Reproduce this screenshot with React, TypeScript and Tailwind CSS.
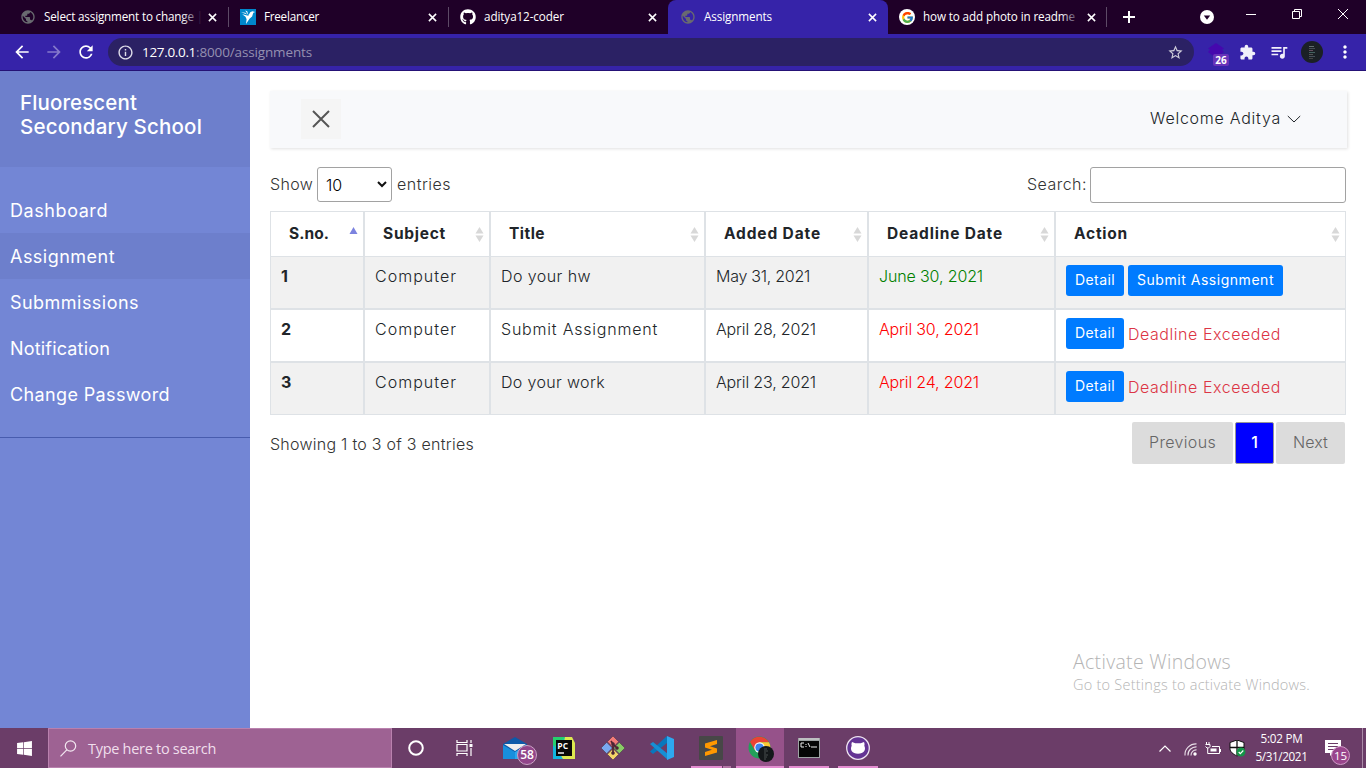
import React, { useLayoutEffect, useRef, useState } from "react";
import {
  MdArrowBack,
  MdArrowForward,
  MdRefresh,
  MdInfoOutline,
  MdStarBorder,
  MdExtension,
  MdQueueMusic,
  MdMoreVert,
  MdPublic,
} from "react-icons/md";
import { FaGithub, FaWindows } from "react-icons/fa";
import { FcGoogle } from "react-icons/fc";

/** A single line of text whose letter spacing is adjusted to fill a given width. */
function Fit({ w, children, className = "" }: { w: number; children: string; className?: string }) {
  const ref = useRef<HTMLSpanElement>(null);
  const [spacing, setSpacing] = useState(0);
  useLayoutEffect(() => {
    if (ref.current) {
      const natural = ref.current.getBoundingClientRect().width;
      setSpacing((w - natural) / Math.max(1, children.length));
    }
  }, [w, children]);
  return (
    <span className={`inline-block whitespace-nowrap ${className}`} style={{ width: w }}>
      <span ref={ref} style={{ letterSpacing: spacing }}>
        {children}
      </span>
    </span>
  );
}

function Close() {
  return (
    <svg viewBox="0 0 10 10" className="size-[9px] shrink-0" stroke="#fff" strokeWidth="1.7">
      <path d="M1 1l8 8M9 1L1 9" />
    </svg>
  );
}

function Bird() {
  return (
    <svg viewBox="0 0 16 16" className="size-4 shrink-0">
      <rect width="16" height="16" fill="#0087cc" />
      <path d="M1 3.300l4.300.5 2 1.700zM5.200 1.500l2 .8 1.300 4zM8.300 6.800l1.900-3.500 2.200-1 2.800.6-1.900.9-1.200 3.700-2.600 2.300L6 15l.6-4.800-1.100-2.400-3.300-2.600 5 1.400z" fill="#fff" />
    </svg>
  );
}

function Tab({ icon, title, w, fade = false, active = false, width, line = false }: {
  icon: React.ReactNode; title: string; w: number; fade?: boolean; active?: boolean; width: string; line?: boolean;
}) {
  return (
    <div className={`relative flex h-[34px] shrink-0 items-center ${width} ${active ? "rounded-t-lg bg-[#3623a9] pl-[12px]" : "pl-5"}`}>
      <span className="flex w-6 shrink-0 items-center">{icon}</span>
      <span className="relative mb-[2px] w-[158px] shrink-0 text-[11.7px] leading-5 text-white">
        <Fit w={w}>{title}</Fit>
        {fade && <span className="absolute inset-y-0 right-0 w-5 bg-linear-to-r from-transparent to-[#1f0028]" />}
      </span>
      <span className="ml-[6px] flex"><Close /></span>
      {line && <span className="absolute right-0 top-[7px] h-5 w-px bg-[#5d4a66]" />}
    </div>
  );
}

function TabStrip() {
  return (
    <div className="flex h-[34px] bg-[#1f0028]">
      <Tab icon={<MdPublic className="size-4 text-[#696a70]" />} title="Select assignment to change |" w={159} fade width="w-[229px]" line />
      <div className="-ml-[9px] flex">
        <Tab icon={<Bird />} title="Freelancer" w={55} width="w-[229px]" line />
      </div>
      <div className="-ml-[9px] flex">
        <Tab icon={<FaGithub className="size-4 text-white" />} title="aditya12-coder" w={80} width="w-[228px]" />
      </div>
      <Tab icon={<MdPublic className="size-4 text-[#696a70]" />} title="Assignments" w={68} active width="w-[220px]" />
      <div className="-ml-[9px] flex">
        <Tab
          icon={<span className="flex size-4 items-center justify-center rounded-full bg-white"><FcGoogle className="size-[13px]" /></span>}
          title="how to add photo in readme" w={152} fade width="w-[228px]" line
        />
      </div>
      <svg viewBox="0 0 12 12" className="ml-4 mt-[11px] size-3" stroke="#fff" strokeWidth="2"><path d="M6 0v12M0 6h12" /></svg>
      <div className="ml-auto flex items-start">
        <svg viewBox="0 0 14 14" className="mt-[10px] size-[14px]"><circle cx="7" cy="7" r="7" fill="#fff" /><path d="M3.800 5.500h6.400L7 9.700z" fill="#1f0028" /></svg>
        <svg viewBox="0 0 10 10" className="ml-8 mt-[10px] size-[10px]" stroke="#fff"><path d="M0 4.500h10" /></svg>
        <svg viewBox="0 0 10 10" className="ml-9 mt-[9px] size-[10px]" stroke="#fff" fill="none"><path d="M.5 2.500h7v7h-7zM2.500 2.500v-2h7v7h-2" /></svg>
        <svg viewBox="0 0 10 10" className="ml-9 mr-[18px] mt-[9px] size-[10px]" stroke="#fff"><path d="M0 0l10 10M10 0L0 10" /></svg>
      </div>
    </div>
  );
}

function Toolbar() {
  return (
    <div className="flex h-[37px] items-center border-b border-[#251276] bg-[#3623a9] text-white">
      <MdArrowBack className="ml-[12px] size-5" />
      <MdArrowForward className="ml-3 size-5 text-[#8579cb]" />
      <MdRefresh className="ml-[12px] size-5" />
      <div className="ml-[12px] flex h-7 w-[1086px] items-center rounded-full bg-[#2b2164] pl-[9px] pr-[10px] text-[13.5px]">
        <MdInfoOutline className="size-[17px] text-[#dedce9]" />
        <span className="ml-[8px] flex leading-5">
          <Fit w={54}>127.0.0.1</Fit>
          <Fit w={116} className="text-[#9590b1]">:8000/assignments</Fit>
        </span>
        <MdStarBorder className="ml-auto size-[17px] text-[#cfcdda]" />
      </div>
      <div className="relative ml-[13px] size-5">
        <svg viewBox="0 0 18 18" className="size-[18px]"><path d="M9 1l8 5.500-2 1.200 2 2.300-8 6-8-6 2-2.300-2-1.200z" fill="#4508ae" /></svg>
        <span className="absolute left-[6px] top-[12px] flex h-[12px] w-4 items-center justify-center rounded-[2px] bg-[#6833b9] text-[10px] font-bold">26</span>
      </div>
      <MdExtension className="ml-[12px] size-[17px] text-[#f1f0fa]" />
      <MdQueueMusic className="ml-[13px] size-5 text-[#f1f0fa]" />
      <div className="ml-[12px] flex size-[22px] items-center justify-center rounded-full bg-[#1b2025]">
        <div className="flex w-[6px] flex-col gap-px">
          <i className="h-px w-[5px] bg-[#626e6e]" /><i className="h-px bg-[#454c54]" /><i className="h-px w-1 bg-[#655060]" /><i className="h-px bg-[#446260]" /><i className="h-px w-1 bg-[#555]" /><i className="h-px bg-[#48505a]" /><i className="h-px w-1 bg-[#444]" />
        </div>
      </div>
      <MdMoreVert className="ml-[12px] size-5" />
    </div>
  );
}

const links: [string, number][] = [
  ["Dashboard", 98],
  ["Assignment", 105],
  ["Submmissions", 129],
  ["Notification", 100],
  ["Change Password", 160],
];

function Sidebar() {
  return (
    <aside className="w-[250px] shrink-0 bg-[#7386d5] text-white">
      <h3 className="h-24 bg-[#6d7fcc] pl-5 pt-5 text-[20.5px] font-medium leading-6">
        <Fit w={117} className="block">Fluorescent</Fit>
        <Fit w={182} className="block">Secondary School</Fit>
      </h3>
      <ul className="h-[271px] border-b border-[#485cae] pt-5 text-[18px] leading-[26px]">
        {links.map(([name, w], i) => (
          <li key={name} className={`h-[46px] px-[10px] pt-[11px] ${i === 1 ? "bg-[#6d7fcc]" : ""}`}>
            <Fit w={w}>{name}</Fit>
          </li>
        ))}
      </ul>
    </aside>
  );
}

const columns: [string, number, string][] = [
  ["S.no.", 40, "w-[94px]"],
  ["Subject", 63, "w-[126px]"],
  ["Title", 36, "w-[215px]"],
  ["Added Date", 97, "w-[163px]"],
  ["Deadline Date", 116, "w-[187px]"],
  ["Action", 54, "w-[291px]"],
];

const rows = [
  { id: "1", title: "Do your hw", tw: 90, added: "May 31, 2021", aw: 94, due: "June 30, 2021", dw: 104, open: true },
  { id: "2", title: "Submit Assignment", tw: 157, added: "April 28, 2021", aw: 100, due: "April 30, 2021", dw: 100, open: false },
  { id: "3", title: "Do your work", tw: 104, added: "April 23, 2021", aw: 100, due: "April 24, 2021", dw: 100, open: false },
];

function SortMark({ active }: { active: boolean }) {
  return (
    <svg viewBox="0 0 9 15" className="h-[15px] w-[9px]">
      {active ? <path d="M0.500 7L4.500 0l4 7z" fill="#7c83df" /> : <path d="M0.500 6.500L4.500 0l4 6.500zM0.500 8.500L4.500 15l4-6.500z" fill="#d8d8d8" />}
    </svg>
  );
}

function DataTable() {
  const cell = "border border-[#dee2e6] px-[10px] pt-2 align-top";
  return (
    <table className="mt-[8px] w-[1076px] table-fixed border-separate border-spacing-0 text-left text-[#212529]">
      <thead>
        <tr className="h-[45px]">
          {columns.map(([name, w, width], i) => (
            <th key={name} className={`border border-b-0 border-[#dee2e6] p-0 pl-[18px] pr-[5px] text-[15.5px] font-bold leading-6 ${width}`}>
              <div className="flex items-center justify-between">
                <Fit w={w}>{name}</Fit>
                <SortMark active={i === 0} />
              </div>
            </th>
          ))}
        </tr>
      </thead>
      <tbody>
        {rows.map((r, i) => (
          <tr key={r.id} className={`h-[53px] ${i % 2 === 0 ? "bg-[#f1f1f1]" : "bg-white"}`}>
            <td className={`${cell} font-bold`}>{r.id}</td>
            <td className={cell}><Fit w={82}>Computer</Fit></td>
            <td className={cell}><Fit w={r.tw}>{r.title}</Fit></td>
            <td className={cell}><Fit w={r.aw}>{r.added}</Fit></td>
            <td className={`${cell} ${r.open ? "text-[#008000]" : "text-[#ff0000]"}`}><Fit w={r.dw}>{r.due}</Fit></td>
            <td className={cell}>
              <div className="flex items-start gap-1">
                <button className="flex h-[31px] w-[58px] items-center justify-center rounded-[3px] bg-[#007bff] pb-px text-[14px] font-normal text-white"><Fit w={40}>Detail</Fit></button>
                {r.open ? (
                  <button className="flex h-[31px] w-[155px] items-center justify-center rounded-[3px] bg-[#007bff] pb-px text-[14px] font-normal text-white"><Fit w={137}>Submit Assignment</Fit></button>
                ) : (
                  <span className="pt-[5px] text-[#dc3545]"><Fit w={153}>Deadline Exceeded</Fit></span>
                )}
              </div>
            </td>
          </tr>
        ))}
      </tbody>
    </table>
  );
}

function Content() {
  return (
    <main className="flex-1 bg-white pl-5 pt-5 text-[16px] font-light leading-[22px] text-[#333]">
      <div className="flex h-[57px] w-[1077px] items-center bg-[#f8f9fb] pb-[2px] pl-[31px] pr-[46px] text-[#212529] shadow-[1px_1px_3px_rgba(0,0,0,0.12)]">
        <button className="flex size-10 items-center justify-center bg-[#f5f5f5]">
          <svg viewBox="0 0 18 18" className="size-[18px]" stroke="#555" strokeWidth="2"><path d="M1 1l16 16M17 1L1 17" /></svg>
        </button>
        <Fit w={131} className="mb-[2px] ml-auto">Welcome Aditya</Fit>
        <svg viewBox="0 0 14 8" className="ml-[6px] h-2 w-[14px]" fill="none" stroke="#212529"><path d="M.8 1L7 7l6.200-6" /></svg>
      </div>
      <div className="mt-[19px] flex h-9 w-[1076px] items-start">
        <Fit w={43} className="mt-[6px]">Show</Fit>
        <div className="ml-1 flex h-[35px] w-[75px] items-center justify-between rounded-[3px] border border-[#a2a2a2] pl-[8px] pr-1 text-black">
          <Fit w={16}>10</Fit>
          <svg viewBox="0 0 10 7" className="h-[7px] w-[10px]" fill="none" stroke="#111" strokeWidth="2"><path d="M1 1l4 4 4-4" /></svg>
        </div>
        <Fit w={54} className="ml-[5px] mt-[6px]">entries</Fit>
        <Fit w={60} className="ml-auto mt-[6px]">Search:</Fit>
        <input aria-label="Search" className="ml-[3px] h-9 w-64 rounded-[3px] border border-[#a2a2a2] bg-white" />
      </div>
      <DataTable />
      <div className="flex w-[1075px] items-start pt-[7px]">
        <Fit w={204} className="mt-[11px]">Showing 1 to 3 of 3 entries</Fit>
        <div className="ml-auto flex h-[42px] gap-[2px] text-[#666]">
          <button className="flex w-[101px] items-center justify-center rounded-[2px] bg-[#dcdcdc] pb-[2px]"><Fit w={67}>Previous</Fit></button>
          <button className="w-[39px] rounded-[2px] border border-[#979797] bg-[#0000ff] pb-[2px] font-medium text-white">1</button>
          <button className="flex w-[69px] items-center justify-center rounded-[2px] bg-[#dcdcdc] pb-[2px]"><Fit w={35}>Next</Fit></button>
        </div>
      </div>
    </main>
  );
}

function AppCell({ children, bar = "", active = false }: { children: React.ReactNode; bar?: string; active?: boolean }) {
  return (
    <div className={`relative flex h-10 w-12 items-center justify-center ${active ? "bg-[#96528a]" : ""}`}>
      {children}
      {bar && <span className={`absolute bottom-0 h-[2px] bg-[#e38cd0] ${bar}`} />}
    </div>
  );
}

function Taskbar() {
  return (
    <footer className="flex h-10 bg-[#6b3d68] text-white">
      <div className="flex w-12 items-center justify-center">
        <FaWindows className="size-[17px]" />
      </div>
      <div className="flex w-[344px] items-center border border-[#b981ae] bg-[#9e6293] pl-[11px] text-[14.5px] text-[#f0dfec]">
        <svg viewBox="0 0 17 17" className="size-[17px]" fill="none" stroke="#f3e8f1" strokeWidth="1.200"><circle cx="10.500" cy="6" r="5.200" /><path d="M6.800 9.800L.5 16.300" /></svg>
        <Fit w={128} className="ml-[11px] mt-px">Type here to search</Fit>
      </div>
      <div className="flex w-12 items-center justify-center">
        <svg viewBox="0 0 18 18" className="size-[18px]" fill="none" stroke="#fff" strokeWidth="2"><circle cx="9" cy="9" r="6.800" /></svg>
      </div>
      <div className="flex w-12 items-center justify-center">
        <svg viewBox="0 0 17 16" className="h-4 w-[17px]" fill="none" stroke="#fff" strokeWidth="1.200"><path d="M1 0v2.500h10V0M1 4.500h10v6.500H1zM1 16v-2.500h10V16M15 0v3M15 8v8" /><path d="M13.500 4h3v3h-3z" fill="#fff" stroke="none" /></svg>
      </div>
      <div className="ml-[3px] flex gap-px">
        <AppCell>
          <svg viewBox="0 0 24 22" className="h-[22px] w-6"><path d="M0 7L12 0l12 7v15H0z" fill="#0d5aa9" /><path d="M0 8l12 7L24 8v14H0z" fill="#188fdd" /><path d="M24 8v14H12V15z" fill="#2aa7ed" /><path d="M1 7h22l-11 7z" fill="#eee" /></svg>
          <span className="absolute left-[26px] top-[17px] flex size-[20px] items-center justify-center rounded-full border border-[#cba3c5] bg-[#91458a] text-[12px] font-semibold">58</span>
        </AppCell>
        <AppCell>
          <svg viewBox="0 0 22 22" className="size-[22px]"><path d="M0 0h14L9 22H0z" fill="#20c997" /><path d="M12 0h7l3 6v16H8z" fill="#dce84f" /><path d="M0 0h12L0 10z" fill="#25d06e" /><path d="M0 8v14h10z" fill="#12b5dd" /><rect x="3" y="3" width="16" height="16" fill="#080808" /><path d="M5 16h6" stroke="#fff" strokeWidth="1.400" /><text x="4.300" y="11.500" fill="#fff" fontSize="8.500" fontWeight="700">PC</text></svg>
        </AppCell>
        <AppCell>
          <svg viewBox="0 0 24 24" className="size-6" stroke="#4d3448" strokeWidth=".6"><path d="M12 0l5.700 5.700-5.700 5.700-5.700-5.700z" fill="#f47b78" /><path d="M5.700 6.300l5.700 5.700-5.700 5.700L0 12z" fill="#79a9ef" /><path d="M18.300 6.300L24 12l-5.700 5.700-5.700-5.700z" fill="#89cc66" /><path d="M12 12.600l5.700 5.700L12 24l-5.700-5.700z" fill="#f5d568" /><path d="M10 5l2 3v9M12 8l4 4" stroke="#51202e" strokeWidth="1.700" fill="none" /><g fill="#51202e"><circle cx="12" cy="8" r="1.500" /><circle cx="12" cy="17" r="1.500" /><circle cx="16" cy="12" r="1.500" /></g></svg>
        </AppCell>
        <AppCell>
          <svg viewBox="0 0 24 24" className="size-6"><path d="M17 0v7L3 18l-3-2.500z" fill="#0877bd" /><path d="M0 8l3-2 15 12v6z" fill="#168fd4" /><path d="M17 0l7 3v18l-7 3z" fill="#2da8ef" /></svg>
        </AppCell>
        <AppCell bar="left-1 w-[31px]">
          <svg viewBox="0 0 24 24" className="size-6"><rect width="24" height="24" rx="1" fill="#474747" /><path d="M6 7.500L18 4v4l-7 2.200 7 2.200v4.200L6 20v-4l7-2.200-7-2.300z" fill="#ff9800" /></svg>
          <span className="absolute bottom-0 left-9 h-[2px] w-2 bg-[#b474a6]" />
        </AppCell>
        <AppCell active bar="inset-x-0">
          <svg viewBox="0 0 26 26" className="ml-[2px] mt-[2px] size-[26px]"><circle cx="11.500" cy="11.500" r="11" fill="#22a05a" /><path d="M2 6A11 11 0 0 1 21 6.200H11.500L6.700 14z" fill="#ea4335" /><path d="M21 6.200A11 11 0 0 1 11.500 22.500l5-8-5-8.300z" fill="#fbc934" /><circle cx="11.500" cy="11.500" r="5.200" fill="#fff" /><circle cx="11.500" cy="11.500" r="4.100" fill="#3f83ee" /><circle cx="18" cy="18" r="8" fill="#14181a" /><path d="M16 13h3M16 15h4M16 17h2M16 19h4M16 21h3M16 23h2" stroke="#555e5d" strokeWidth=".8" /></svg>
        </AppCell>
        <AppCell bar="left-1 w-10">
          <svg viewBox="0 0 22 20" className="h-5 w-[22px]"><path d="M0 0h22v20H0z" fill="#9da2a3" /><path d="M1 3h20v16H1z" fill="#050505" /><path d="M1 1h20" stroke="#ddd" /><path d="M6 5H3v4h3M8 6v1M8 8v1M10 5l2 4M13 9h6" stroke="#eee" fill="none" /></svg>
        </AppCell>
        <AppCell bar="left-1 w-10">
          <svg viewBox="0 0 24 24" className="size-6"><circle cx="12" cy="12" r="11.300" fill="#643494" stroke="#eee4f1" strokeWidth="1.300" /><path d="M6 6l3.300 1.300h5.400L18 6c.6 1.300.7 2.700.3 3.700 2 3.900-.3 8-6.300 8s-8.300-4.100-6.300-8C5.300 8.700 5.400 7.300 6 6z" fill="#fff" /></svg>
        </AppCell>
      </div>
      <div className="ml-auto flex items-center">
        <svg viewBox="0 0 12 7" className="h-[7px] w-3" fill="none" stroke="#fff" strokeWidth="1.200"><path d="M.5 6.500L6 1l5.500 5.500" /></svg>
        <svg viewBox="0 0 13 13" className="ml-[13px] mt-[3px] size-[13px]" fill="none" stroke="#e9dfe8" strokeWidth="1.100"><path d="M1 12.500C.5 6 6 .7 12.500.9M4 12.500c-.5-5 4-8.800 8.500-8.600M7 12.500c-.2-3.200 2.700-5.800 5.500-5.600" /><circle cx="11" cy="11" r="1.700" fill="#fff" stroke="none" /></svg>
        <svg viewBox="0 0 16 13" className="ml-[8px] h-[13px] w-4" fill="none" stroke="#fff"><path d="M1.500 0v2M4 0v2M.5 2.500H5v2L3.500 6H2L.5 4.500M2.700 6v5.500h11.800v-7H7" /><path d="M15 7h1v3h-1zM5.500 6.500h6v3h-6z" fill="#fff" stroke="none" /></svg>
        <svg viewBox="0 0 17 17" className="ml-[8px] size-[17px]"><path d="M8 0l7 2.500v6C15 12 12 14 8 16 4 14 1 12 1 8.500v-6z" fill="#fff" stroke="#111" /><path d="M8 0v15M1 7.500h14" stroke="#111" strokeWidth="1.300" /><circle cx="12" cy="12" r="4.500" fill="#149447" /><path d="M9.700 12l1.600 1.700 3-3.200" stroke="#fff" fill="none" strokeWidth="1.100" /></svg>
        <div className="mb-[2px] ml-[9px] flex w-[53px] flex-col items-center text-[11.7px] leading-[18px]">
          <Fit w={42}>5:02 PM</Fit>
          <Fit w={52}>5/31/2021</Fit>
        </div>
        <div className="relative ml-[17px] h-4 w-4">
          <svg viewBox="0 0 16 16" className="size-4"><path d="M0 0h16v13H8l-3 3v-3H0z" fill="#fff" /><path d="M3 3.500h10M3 6.500h10M3 9.500h6" stroke="#6b3d68" /></svg>
          <span className="absolute left-[6px] top-[6px] flex size-[19px] items-center justify-center rounded-full border border-[#cf99c7] bg-[#99458c] text-[11.5px] font-medium">15</span>
        </div>
        <span className="ml-[21px] mr-[3px] h-10 w-px bg-[#aa8ba7]" />
      </div>
    </footer>
  );
}

export default function App() {
  return (
    <div className="relative flex h-[768px] w-[1366px] flex-col overflow-hidden bg-white font-['Open_Sans','Noto_Sans',sans-serif]">
      <TabStrip />
      <Toolbar />
      <div className="flex h-[657px] font-['Inter',sans-serif]">
        <Sidebar />
        <Content />
      </div>
      <div className="absolute left-[1073px] top-[651px] flex flex-col text-[#b4b4b4]">
        <Fit w={158} className="text-[19.5px] font-light leading-[22px]">Activate Windows</Fit>
        <Fit w={237} className="text-[14.5px] font-light leading-[24px]">Go to Settings to activate Windows.</Fit>
      </div>
      <Taskbar />
    </div>
  );
}
